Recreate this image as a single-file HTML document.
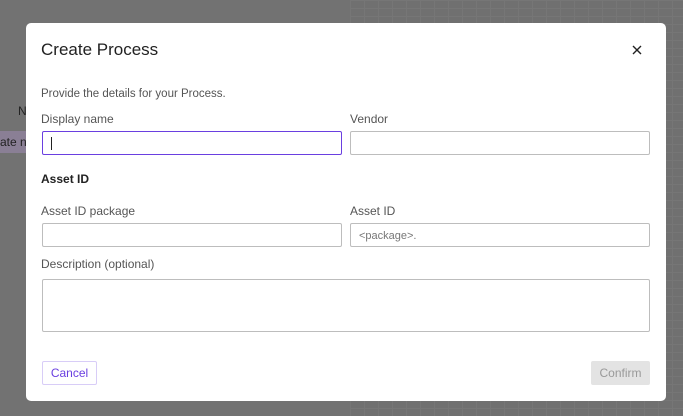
<!DOCTYPE html>
<html><head><style>
body{margin:0;width:683px;height:416px;overflow:hidden;background:#727272;font-family:"Liberation Sans",sans-serif;position:relative}
.bgr{position:absolute;left:350px;top:0;width:333px;height:416px;background:#707070;background-image:linear-gradient(#767676 1px,transparent 1px),linear-gradient(90deg,#767676 1px,transparent 1px);background-size:14px 8px}
.m{position:absolute;left:26px;top:23px;width:640px;height:378px;background:#fff;border-radius:5px}
.a{position:absolute;color:#555;font-size:12px}
.i{position:absolute;border:1px solid #bdbdbd;border-radius:2px;box-sizing:border-box;background:#fff}
</style></head><body>
<div class="bgr"></div>
<div style="position:absolute;left:18px;top:104px;font-size:12px;color:#222">N</div>
<div style="position:absolute;left:0;top:131px;width:30px;height:22px;background:#8a7f95;color:#222;font-size:12px;line-height:22px;white-space:nowrap;overflow:hidden">ate ne</div>
<div class="m">
<div style="position:absolute;left:15px;top:17px;font-size:17px;color:#222">Create Process</div>
<svg style="position:absolute;left:606px;top:22px" width="10" height="10" viewBox="0 0 10 10"><path d="M1 1L9 9M9 1L1 9" stroke="#222" stroke-width="1.4"/></svg>
<div class="a" style="left:15px;top:65px;font-size:11.5px">Provide the details for your Process.</div>
<div class="a" style="left:15px;top:89px">Display name</div>
<div class="a" style="left:324px;top:89px">Vendor</div>
<div class="i" style="left:16px;top:108px;width:300px;height:24px;border-color:#6a3fe0"><div style="position:absolute;left:8px;top:5px;width:1px;height:13px;background:#222"></div></div>
<div class="i" style="left:324px;top:108px;width:300px;height:24px"></div>
<div style="position:absolute;left:15px;top:149px;font-size:12px;font-weight:bold;color:#222">Asset ID</div>
<div class="a" style="left:15px;top:181px">Asset ID package</div>
<div class="a" style="left:324px;top:181px">Asset ID</div>
<div class="i" style="left:16px;top:200px;width:300px;height:24px"></div>
<div class="i" style="left:324px;top:200px;width:300px;height:24px;color:#777;font-size:11px;padding:6px 0 0 8px">&lt;package&gt;.</div>
<div class="a" style="left:15px;top:234px">Description (optional)</div>
<div class="i" style="left:16px;top:256px;width:608px;height:53px"></div>
<div class="i" style="left:16px;top:338px;width:55px;height:24px;border-color:#d8cdf7;color:#6a3fe0;font-size:12px;text-align:center;line-height:22px">Cancel</div>
<div style="position:absolute;left:565px;top:338px;width:59px;height:24px;background:#e3e3e3;border-radius:2px;color:#999;font-size:12px;text-align:center;line-height:24px">Confirm</div>
</div>
</body></html>
